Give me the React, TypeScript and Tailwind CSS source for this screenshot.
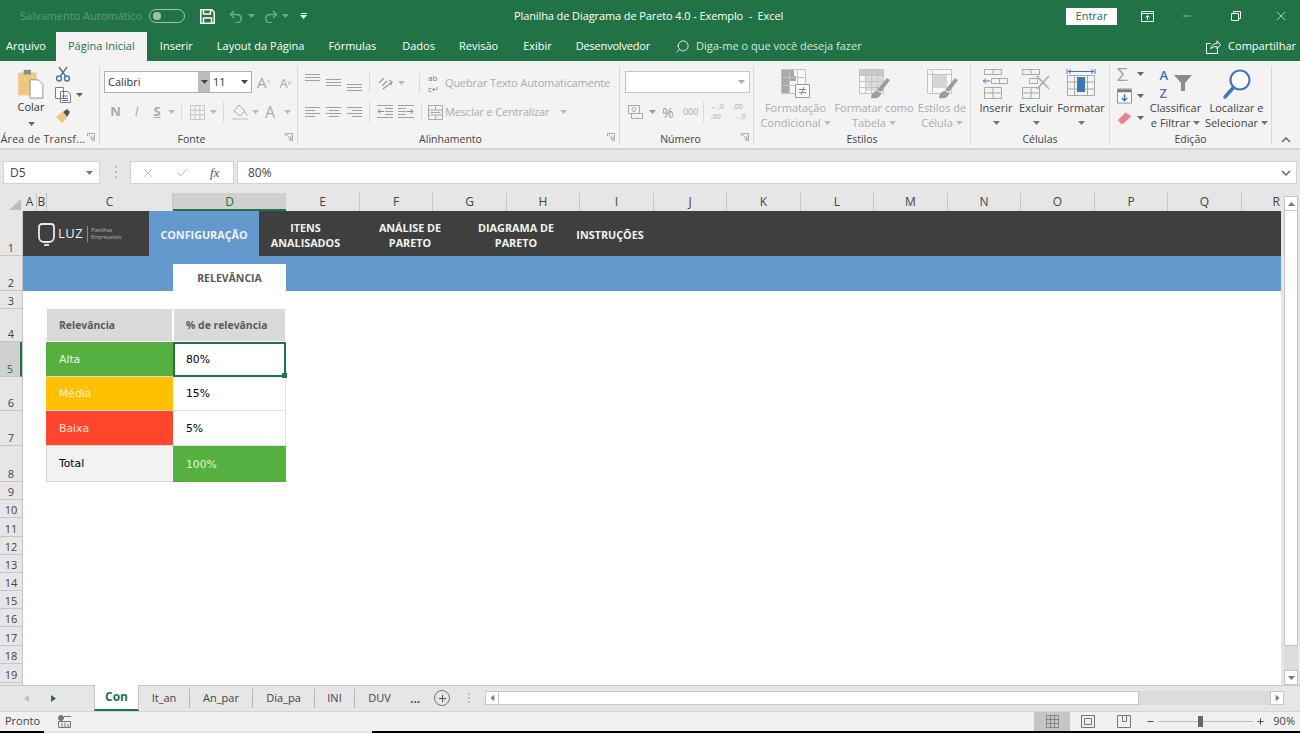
import { Check, Minus, Plus, Search, X } from 'lucide-react';
import type { ReactNode } from 'react';

const uiFont = "font-['Open_Sans','Noto_Sans',sans-serif]";

const columns: [string, number][] = [
  ['A', 14], ['B', 10], ['C', 126], ['D', 113], ['E', 74], ['F', 73], ['G', 74], ['H', 73], ['I', 74],
  ['J', 73], ['K', 74], ['L', 73], ['M', 74], ['N', 73], ['O', 74], ['P', 73], ['Q', 74], ['R', 39],
];

const rowHeights = [45, 35, 18, 33, 35, 34, 35, 36, 18, 18, 19, 18, 18, 18, 18, 18, 19, 18, 19];

const tabs = [
  { label: 'It_an', w: 'w-[51px]' },
  { label: 'An_par', w: 'w-[63px]' },
  { label: 'Dia_pa', w: 'w-[62px]' },
  { label: 'INI', w: 'w-[40px]' },
];

const menu = [
  { label: 'Inserir', cls: 'ml-[13px]' },
  { label: 'Layout da Página', cls: 'ml-[24px]' },
  { label: 'Fórmulas', cls: 'ml-[24px]' },
  { label: 'Dados', cls: 'ml-[26px]' },
  { label: 'Revisão', cls: 'ml-[24px]' },
  { label: 'Exibir', cls: 'ml-[25px]' },
  { label: 'Desenvolvedor', cls: 'ml-[24px] tracking-[-0.2px]' },
];

function Caret({ className = 'text-[#8a8a8a]' }: { className?: string }) {
  return (
    <svg width="7" height="4" viewBox="0 0 7 4" className={`shrink-0 ${className}`}>
      <path d="M0 0h7L3.5 4z" fill="currentColor" />
    </svg>
  );
}

function Launcher() {
  return (
    <svg width="8" height="8" viewBox="0 0 8 8" className="absolute bottom-[4px] right-[4px]" fill="none" stroke="#a8a8a8">
      <path d="M.5 3V.5h7v7H5M2 2l4 4M6 3.5V6H3.5" />
    </svg>
  );
}

function Group({ w, label, labelCls = '', children }: { w: string; label: string; labelCls?: string; children: ReactNode }) {
  return (
    <div className={`relative mb-[3px] mt-[5px] flex shrink-0 flex-col border-r border-[#d8d8d8] ${w}`}>
      <div className="h-[66px] shrink-0">{children}</div>
      <div className={`mt-auto whitespace-nowrap pb-[1px] text-center text-[10.5px] leading-[14px] text-[#444] ${labelCls}`}>{label}</div>
    </div>
  );
}

function Lines({ widths, align = 'items-start' }: { widths: number[]; align?: string }) {
  return (
    <div className={`flex w-[15px] flex-col gap-[2px] ${align}`}>
      {widths.map((w, i) => (
        <div key={i} className="h-[1px] bg-[#9f9f9f]" style={{ width: w }} />
      ))}
    </div>
  );
}

function GridIcon({ className = 'text-[#b4b4b4]', size = 16 }: { className?: string; size?: number }) {
  return (
    <svg width={size} height={size} viewBox="0 0 16 16" fill="none" stroke="currentColor" className={className}>
      <path d="M.5.5h15v15H.5zM.5 5.5h15M.5 10.5h15M5.5.5v15M10.5.5v15" />
    </svg>
  );
}

function IndentIcon({ flip = false }: { flip?: boolean }) {
  return (
    <svg width="16" height="14" viewBox="0 0 16 14" fill="none" stroke="#a0a0a0" className={flip ? '-scale-x-100' : ''}>
      <path d="M0 .5h16M8 3.500h8M8 6.500h8M8 9.500h8M0 12.500h16" />
      <path d="M7 6.500H1M3.500 4L1 6.500 3.500 9" stroke="#7f8c99" />
    </svg>
  );
}

function BigStyleIcon({ variant }: { variant: 'cond' | 'table' | 'cell' }) {
  return (
    <svg width="36" height="32" viewBox="0 0 36 32" fill="none">
      <path d="M3.5 1.5h24v24h-24z" stroke="#c4c4c4" fill="#f8f8f8" />
      {variant === 'cond' && (
        <>
          <path d="M4 2h8v23H4zM12 8h6v5h-6zM12 2h4v6h-4z" fill="#a9a9a9" />
          <path d="M11.5 1.5v24M19.5 1.5v24M3.5 9.5h24M3.5 17.5h24" stroke="#c4c4c4" />
          <path d="M17.5 16.5h14v13h-14z" fill="#f8f8f8" stroke="#9c9c9c" />
          <path d="M21 21.5h7M21 24.5h7M26 19l-3 8" stroke="#8a8a8a" />
        </>
      )}
      {variant === 'table' && (
        <>
          <path d="M4 2h23v5H4z" fill="#c8c8c8" />
          <path d="M9 7h18v16H9z" fill="#dedade" />
          <path d="M3.5 7.5h24M3.5 13.5h24M3.5 19.5h24M9.5 1.5v24M15.5 1.5v24M21.5 1.5v24" stroke="#c4c4c4" />
          <path d="M21 22l10-12 3 2-9 12zM15 30c0-4 3-7 6-7l4 2c0 4-4 6-10 5z" fill="#9c9c9c" />
        </>
      )}
      {variant === 'cell' && (
        <>
          <path d="M8 6h15v14H8z" fill="#d6d6d6" />
          <path d="M8.5 1.5v24M3.5 6.5h24" stroke="#c4c4c4" />
          <path d="M21 22l10-12 3 2-9 12zM15 30c0-4 3-7 6-7l4 2c0 4-4 6-10 5z" fill="#9c9c9c" />
        </>
      )}
    </svg>
  );
}

function TitleBar() {
  return (
    <div className="relative flex h-[32px] shrink-0 items-center bg-[#217346] text-[#fff]">
      <span className="ml-[20px] w-[129px] text-[11px] text-[#5d9a7a]">Salvamento Automático</span>
      <div className="flex h-[14px] w-[36px] items-center rounded-full border border-[#9cc3ae] pl-[3px]">
        <div className="h-[8px] w-[8px] rounded-full bg-[#9cc3ae]" />
      </div>
      <svg width="15" height="15" viewBox="0 0 15 15" className="ml-[15px]" fill="none" stroke="#fff" strokeWidth="1.5">
        <path d="M.8.8h11l2.4 2.4v11H.8zM3.5 1v4h7V1M3.5 14V9h8v5" />
      </svg>
      <svg width="15" height="13" viewBox="0 0 15 13" className="ml-[14px]" fill="none" stroke="#6fa78a" strokeWidth="1.6">
        <path d="M5 1L1.5 4.5 5 8M2 4.5h7a4.2 4.2 0 010 8.2H6" />
      </svg>
      <Caret className="ml-[4px] text-[#6fa78a]" />
      <svg width="15" height="13" viewBox="0 0 15 13" className="ml-[8px]" fill="none" stroke="#6fa78a" strokeWidth="1.6">
        <path d="M10 1l3.5 3.5L10 8M13 4.5H6a4.2 4.2 0 000 8.2h3" />
      </svg>
      <Caret className="ml-[4px] text-[#6fa78a]" />
      <div className="ml-[11px] flex flex-col items-center gap-[1px]">
        <div className="h-[1px] w-[6px] bg-white" />
        <Caret className="text-white" />
      </div>
      <span className="ml-[207px] text-[11px] tracking-[-0.1px] whitespace-pre">Planilha de Diagrama de Pareto 4.0 - Exemplo  -  Excel</span>
      <div className="ml-auto flex items-center">
        <div className="flex h-[17px] w-[51px] items-center justify-center bg-white text-[11px] text-[#217346]">Entrar</div>
        <svg width="13" height="11" viewBox="0 0 13 11" className="ml-[24px]" fill="none" stroke="#fff">
          <path d="M.5.5h12v10H.5zM.5 2.5h12M6.5 9V4.5M4.5 6.5l2-2 2 2" />
        </svg>
        <Minus size={12} strokeWidth={1} className="ml-[27px]" />
        <svg width="10" height="10" viewBox="0 0 10 10" className="ml-[38px]" fill="none" stroke="#fff">
          <path d="M.5 2.5h7v7h-7zM2.5 2.5v-2h7v7h-2" />
        </svg>
        <X size={16} strokeWidth={1} className="ml-[32px] mr-[11px]" />
      </div>
    </div>
  );
}

function MenuRow() {
  return (
    <div className="flex h-[29px] shrink-0 items-center bg-[#217346] text-[11px] text-white">
      <span className="ml-[6px]">Arquivo</span>
      <div className="ml-[10px] flex h-full w-[91px] items-center justify-center bg-[#f3f3f3] text-[#217346]">Página Inicial</div>
      {menu.map((m) => (
        <span key={m.label} className={m.cls}>{m.label}</span>
      ))}
      <Search size={15} strokeWidth={1.3} className="ml-[25px] -scale-x-100" />
      <span className="ml-[6px] text-[#d7e6dd]">Diga-me o que você deseja fazer</span>
      <svg width="15" height="14" viewBox="0 0 15 14" className="ml-auto" fill="none" stroke="#fff">
        <path d="M5 3.5H.5v10h11V9M5 9c0-4 3-5.500 6-5.500V.8l3.500 4-3.500 4V6.500C8 6.500 6 7 5 9z" />
      </svg>
      <span className="ml-[7px] mr-[4px]">Compartilhar</span>
    </div>
  );
}

function Ribbon() {
  const disabled = 'text-[#ababab]';
  return (
    <div className="flex h-[89px] shrink-0 border-b-2 border-[#d4d4d4] bg-[#f3f3f3] text-[11px] text-[#444]">
      <Group w="w-[100px]" label="Área de Transf..." labelCls="pr-[13px] tracking-[0.3px]">
        <div className="flex">
          <div className="ml-[13px] flex w-[36px] flex-col items-center pt-[2px]">
            <svg width="30" height="31" viewBox="0 0 30 34">
              <path d="M1 5h20v25H1z" fill="#f0c77f" />
              <path d="M7 2h8v5H7z" fill="#8c8c8c" />
              <path d="M14 13h9l5 5v15H14z" fill="#fff" stroke="#8c8c8c" />
            </svg>
            <span className="text-[#333]">Colar</span>
            <Caret className="mt-[6px] text-[#666]" />
          </div>
          <div className="ml-[6px] flex flex-col gap-[5px]">
            <svg width="16" height="16" viewBox="0 0 16 16" fill="none">
              <path d="M4 1l6.500 9M12 1L5.500 10" stroke="#666" strokeWidth="1.300" />
              <circle cx="4" cy="12.500" r="2.500" stroke="#3f78b8" strokeWidth="1.400" />
              <circle cx="12" cy="12.500" r="2.500" stroke="#3f78b8" strokeWidth="1.400" />
            </svg>
            <div className="flex items-center gap-[5px]">
              <svg width="16" height="16" viewBox="0 0 16 16" fill="#fff" stroke="#7c7c7c">
                <path d="M.5.5h8v11h-8zM5.500 4.500h7l3 3v8h-10z" />
                <path d="M7 9h6M7 11.500h6M7 13.500h6" stroke="#3f78b8" />
              </svg>
              <Caret className="text-[#666]" />
            </div>
            <svg width="16" height="16" viewBox="0 0 16 16">
              <path d="M1 9l6-5 5 6-5 5z" fill="#f0c77f" />
              <path d="M8 4l4-3 3 3-3 5z" fill="#555" />
            </svg>
          </div>
        </div>
        <Launcher />
      </Group>

      <Group w="w-[198px]" label="Fonte" labelCls="pr-[14px]">
        <div className="ml-[4px] mt-[5px] flex h-[22px] w-[148px] border border-[#b0b0b0] bg-white">
          <span className="flex-1 pl-[3px] leading-[20px] text-[#333]">Calibri</span>
          <div className="flex w-[12px] items-center justify-center bg-[#bdbdbd]"><Caret className="text-[#444]" /></div>
          <div className="flex w-[41px] items-center justify-between px-[3px] text-[#333]">11<Caret className="text-[#444]" /></div>
        </div>
        <div className="absolute left-[157px] top-[7px] flex items-baseline gap-[9px] text-[15px] leading-[18px] text-[#a9a9a9]">
          <span>A<sup className="text-[7px]">^</sup></span>
          <span className="text-[13px]">A<sup className="text-[7px]">v</sup></span>
        </div>
        <div className={`mt-[9px] flex h-[20px] items-center pl-[6px] text-[13px] ${disabled}`}>
          <span className="w-[19px] text-center font-bold">N</span>
          <span className="ml-[4px] w-[15px] text-center italic">I</span>
          <span className="ml-[7px] w-[12px] text-center font-bold underline">S</span>
          <Caret className="ml-[5px] text-[#bbb]" />
          <div className="ml-[6px] h-[20px] w-[1px] bg-[#d8d8d8]" />
          <GridIcon className="ml-[8px] text-[#c4c4c4]" size={15} />
          <Caret className="ml-[5px] text-[#bbb]" />
          <div className="ml-[6px] h-[20px] w-[1px] bg-[#d8d8d8]" />
          <svg width="18" height="18" viewBox="0 0 18 18" className="ml-[7px]" fill="none" stroke="#a9a9a9">
            <path d="M8 2l6 6-5 5-6-5zM14 9c1 2 2 3 2 4" />
            <path d="M1 16h16" stroke="#d8d8d8" strokeWidth="2" />
          </svg>
          <Caret className="ml-[3px] text-[#bbb]" />
          <span className="ml-[6px] text-[16px]">A</span>
          <Caret className="ml-[9px] text-[#bbb]" />
        </div>
        <Launcher />
      </Group>

      <Group w="w-[322px]" label="Alinhamento" labelCls="pr-[16px]">
        <div className="mt-[6px] flex h-[22px] items-center pl-[7px]">
          <div className="flex h-[18px] w-[57px] gap-[6px]">
            <Lines widths={[15, 15, 15]} />
            <div className="mt-[5px]"><Lines widths={[15, 15, 15]} /></div>
            <div className="mt-[10px]"><Lines widths={[15, 15, 15]} /></div>
          </div>
          <div className="ml-[7px] h-[20px] w-[1px] bg-[#d8d8d8]" />
          <svg width="16" height="16" viewBox="0 0 16 16" className="ml-[7px]" fill="none" stroke="#9a9a9a">
            <path d="M2 8l5-5M5 11l5-5M6 14l9-7M12 5l3 2-1 3" strokeWidth="1.200" />
          </svg>
          <Caret className="ml-[5px] text-[#bbb]" />
          <div className="ml-[14px] h-[20px] w-[1px] bg-[#d8d8d8]" />
          <span className="ml-[8px] w-[15px] text-[8px] leading-[11px] text-[#777]">ab<br />c↵</span>
          <span className={`ml-[2px] whitespace-nowrap tracking-[-0.15px] ${disabled}`}>Quebrar Texto Automaticamente</span>
        </div>
        <div className="mt-[7px] flex h-[22px] items-center pl-[7px]">
          <div className="flex w-[57px] gap-[6px]">
            <Lines widths={[15, 10, 15, 10]} />
            <Lines widths={[15, 10, 15, 10]} align="items-center" />
            <Lines widths={[15, 10, 15, 10]} align="items-end" />
          </div>
          <div className="ml-[7px] h-[20px] w-[1px] bg-[#d8d8d8]" />
          <div className="ml-[7px] w-[16px]"><IndentIcon /></div>
          <div className="ml-[5px] w-[16px]"><IndentIcon flip /></div>
          <div className="ml-[7px] h-[20px] w-[1px] bg-[#d8d8d8]" />
          <svg width="15" height="15" viewBox="0 0 15 15" className="ml-[6px]" fill="none" stroke="#a9a9a9">
            <path d="M.5.5h14v14H.5zM.5 5h14M.5 10h14M7.500.5V5M7.500 10v4.500M3 7.500h9M4 6.500l-1 1 1 1M11 6.500l1 1-1 1" />
          </svg>
          <span className={`ml-[2px] whitespace-nowrap tracking-[-0.15px] ${disabled}`}>Mesclar e Centralizar</span>
          <Caret className="ml-[11px] text-[#bbb]" />
        </div>
        <Launcher />
      </Group>

      <Group w="w-[134px]" label="Número" labelCls="pr-[12px]">
        <div className="ml-[5px] mt-[5px] flex h-[22px] w-[125px] items-center justify-end border border-[#c6c6c6] bg-white pr-[4px]">
          <Caret className="text-[#aaa]" />
        </div>
        <div className={`mt-[9px] flex h-[20px] items-center pl-[8px] ${disabled}`}>
          <svg width="15" height="14" viewBox="0 0 15 14" fill="none" stroke="#a9a9a9">
            <path d="M.5.500h11v8H.5zM3.500 8.500h11v5h-11z" />
            <circle cx="6" cy="4.500" r="2" />
          </svg>
          <Caret className="ml-[6px] text-[#999]" />
          <span className="ml-[6px] w-[14px] text-[14px] text-[#999]">%</span>
          <span className="ml-[7px] w-[16px] text-[9px]">000</span>
          <div className="ml-[4px] h-[20px] w-[1px] bg-[#d8d8d8]" />
          <span className="ml-[7px] w-[16px] text-[7px] leading-[10px]">←,0<br />,00</span>
          <span className="ml-[6px] w-[14px] text-[7px] leading-[10px]">,00<br />→,0</span>
        </div>
        <Launcher />
      </Group>

      <Group w="w-[217px]" label="Estilos">
        <div className={`flex pt-[2px] leading-[15px] ${disabled}`}>
          <div className="ml-[5px] flex w-[73px] flex-col items-center">
            <BigStyleIcon variant="cond" />
            <span className="whitespace-nowrap">Formatação</span>
            <span className="flex items-center gap-[3px]">Condicional<Caret className="text-[#bbb]" /></span>
          </div>
          <div className="flex w-[84px] flex-col items-center">
            <BigStyleIcon variant="table" />
            <span className="whitespace-nowrap">Formatar como</span>
            <span className="flex items-center gap-[3px]">Tabela<Caret className="text-[#bbb]" /></span>
          </div>
          <div className="flex w-[52px] flex-col items-center">
            <BigStyleIcon variant="cell" />
            <span className="whitespace-nowrap">Estilos de</span>
            <span className="flex items-center gap-[3px]">Célula<Caret className="text-[#bbb]" /></span>
          </div>
        </div>
      </Group>

      <Group w="w-[139px]" label="Células">
        <div className="flex pt-[2px] leading-[15px]">
          <div className="ml-[6px] flex w-[38px] flex-col items-center">
            <svg width="28" height="32" viewBox="0 0 28 32" fill="none" stroke="#a9a9a9">
              <path d="M2.500 1.500h17v5h-17zM11 1.500v5M2.500 19.500h17v11h-17zM2.500 25h17M11 19.500v11M9.500 10.500h16v5h-16zM17.500 10.500v5" />
              <path d="M8 13H1M4 10.500L1.500 13 4 15.500" stroke="#3f78b8" />
            </svg>
            <span>Inserir</span>
            <Caret className="mt-[6px] text-[#777]" />
          </div>
          <div className="flex w-[42px] flex-col items-center">
            <svg width="30" height="32" viewBox="0 0 30 32" fill="none" stroke="#a9a9a9">
              <path d="M1.500 1.500h17v5h-17zM10 1.500v5M1.500 19.500h17v11h-17zM1.500 25h17M10 19.500v11M8.500 10.500h8v5h-8z" />
              <path d="M16 8l12 13M28 8L16 21" strokeWidth="1.500" />
            </svg>
            <span>Excluir</span>
            <Caret className="mt-[6px] text-[#777]" />
          </div>
          <div className="flex w-[48px] flex-col items-center">
            <svg width="30" height="32" viewBox="0 0 30 32" fill="none" stroke="#a9a9a9">
              <path d="M1.500 7.500h27v20h-27zM1.500 14h27M1.500 21h27M8.500 7.500v20M21.500 7.500v20" />
              <path d="M11 9h8v15h-8z" fill="#3f78b8" stroke="none" />
              <path d="M1 1v5M29 1v5M2 3.500h26M5 1.500L2.500 3.500 5 5.500M25 1.500l2.500 2-2.500 2" stroke="#3f78b8" />
            </svg>
            <span>Formatar</span>
            <Caret className="mt-[6px] text-[#777]" />
          </div>
        </div>
      </Group>

      <Group w="w-[162px]" label="Edição">
        <div className="flex leading-[15px]">
          <div className="ml-[7px] flex w-[27px] flex-col gap-[6px]">
            <div className="flex h-[16px] items-center gap-[5px]">
              <span className="w-[16px] text-[19px] leading-[16px] text-[#a0a0a0]">Σ</span>
              <Caret className="text-[#666]" />
            </div>
            <div className="flex h-[16px] items-center gap-[5px]">
              <svg width="16" height="16" viewBox="0 0 16 16" fill="#fff" stroke="#8c8c8c">
                <path d="M.5.500h15v15H.5z" />
                <path d="M1 1h14v3H1z" fill="#777" stroke="none" />
                <path d="M8 6v7M5 10l3 3 3-3" stroke="#2f75b5" strokeWidth="1.500" fill="none" />
              </svg>
              <Caret className="text-[#666]" />
            </div>
            <div className="flex h-[16px] items-center gap-[5px]">
              <svg width="16" height="14" viewBox="0 0 16 14">
                <path d="M1 9l8-8 6 4-8 8H4z" fill="#ee7f8c" />
              </svg>
              <Caret className="text-[#666]" />
            </div>
          </div>
          <div className="flex w-[63px] flex-col items-center">
            <div className="flex h-[34px] w-[32px] items-start">
              <span className="w-[14px] text-[13px] font-semibold leading-[18px] text-[#2f75b5]">A<br /><span className="text-[#8a5aa6]">Z</span></span>
              <svg width="18" height="18" viewBox="0 0 18 18" className="mt-[8px]">
                <path d="M0 1h18l-7 8v8H7V9z" fill="#8c8c8c" />
              </svg>
            </div>
            <span>Classificar</span>
            <span className="flex items-center gap-[3px] whitespace-nowrap">e Filtrar<Caret className="text-[#777]" /></span>
          </div>
          <div className="ml-[1px] flex w-[57px] flex-col items-center pt-[2px]">
            <svg width="30" height="32" viewBox="0 0 30 32" fill="none">
              <circle cx="18" cy="12" r="9.500" stroke="#3f78b8" strokeWidth="2.200" fill="#fff" />
              <path d="M11 20L3 29" stroke="#3f78b8" strokeWidth="3.500" strokeLinecap="round" />
            </svg>
            <span className="whitespace-nowrap">Localizar e</span>
            <span className="flex items-center gap-[3px] whitespace-nowrap">Selecionar<Caret className="text-[#777]" /></span>
          </div>
        </div>
      </Group>

      <div className="flex flex-1 items-end justify-center pb-[5px]">
        <svg width="10" height="6" viewBox="0 0 10 6" fill="none" stroke="#666" strokeWidth="1.500">
          <path d="M1 5l4-4 4 4" />
        </svg>
      </div>
    </div>
  );
}

function FormulaBar() {
  return (
    <div className="flex h-[36px] shrink-0 items-start bg-[#e6e6e6] pt-[11px] text-[12px] text-[#444]">
      <div className="ml-[3px] flex h-[23px] w-[97px] items-center justify-between border border-[#d4d4d4] bg-white pl-[6px] pr-[6px]">
        D5<Caret className="text-[#777]" />
      </div>
      <div className="ml-[15px] mt-[5px] flex h-[12px] w-[2px] flex-col justify-between">
        <div className="h-[2px] bg-[#b8b8b8]" />
        <div className="h-[2px] bg-[#b8b8b8]" />
        <div className="h-[2px] bg-[#b8b8b8]" />
      </div>
      <div className="ml-[13px] flex h-[23px] w-[104px] items-center border border-[#d4d4d4] bg-white pl-[10px] text-[#b4b4b4]">
        <X size={14} strokeWidth={1.5} />
        <Check size={15} strokeWidth={1.5} className="ml-[20px]" />
        <span className="ml-[20px] font-['Liberation_Serif',serif] text-[13px] italic text-[#555]">fx</span>
      </div>
      <div className="ml-[3px] flex h-[23px] w-[1060px] items-center justify-between border border-[#d4d4d4] bg-white pl-[10px] pr-[5px]">
        80%
        <svg width="10" height="6" viewBox="0 0 10 6" fill="none" stroke="#666" strokeWidth="1.500">
          <path d="M1 1l4 4 4-4" />
        </svg>
      </div>
    </div>
  );
}

function ColumnHeaders() {
  return (
    <div className="flex h-[18px] items-stretch bg-[#e6e6e6] text-[12px] leading-[18px] text-[#444]">
      <div className="relative h-full w-[23px] shrink-0">
        <svg width="12" height="11" viewBox="0 0 12 11" className="absolute bottom-[1px] right-[2px]">
          <path d="M12 0v11H0z" fill="#bdbdbd" />
        </svg>
      </div>
      {columns.map(([name, w]) => (
        <div
          key={name}
          style={{ width: w }}
          className={
            name === 'D'
              ? 'border-b-2 border-[#217346] bg-[#d0d0d0] text-center text-[#217346]'
              : name === 'R'
                ? 'pr-[1px] text-right'
                : 'border-r border-[#c6c6c6] text-center'
          }
        >
          {name}
        </div>
      ))}
    </div>
  );
}

function RowHeaders() {
  return (
    <div className="w-[23px] shrink-0 border-r border-[#c6c6c6] bg-[#e6e6e6] text-[11px] text-[#444]">
      {rowHeights.map((h, i) => (
        <div
          key={i}
          style={{ height: h }}
          className={`flex items-end justify-center border-b border-[#c6c6c6] leading-[14px] ${
            i === 4 ? 'border-r-2 border-r-[#217346] bg-[#d0d0d0] text-[#217346]' : ''
          }`}
        >
          {i + 1}
        </div>
      ))}
    </div>
  );
}

function NavItem({ w, children }: { w: string; children: ReactNode }) {
  return <div className={`flex shrink-0 items-center justify-center pt-[2px] text-center ${w}`}>{children}</div>;
}

function ConfigTable() {
  const cell = "flex items-center pt-[2px] font-['DejaVu_Sans',sans-serif] text-[10.8px]";
  const head = "mb-[1px] ml-[1px] mr-[1px] flex items-center bg-[#d9d9d9] pl-[12px] pt-[2px] text-[10.4px] font-bold text-[#595959]";
  return (
    <div className="ml-[23px] mt-[18px] grid w-[240px] grid-cols-[127px_113px] grid-rows-[33px_35px_34px_35px_36px]">
      <div className={head}>Relevância</div>
      <div className={head}>% de relevância</div>
      <div className={`${cell} border-b border-[#d9d9d9] bg-[#55b03f] pl-[13px] text-[#f2f2f2]`}>Alta</div>
      <div className={`${cell} relative border-2 border-[#217346] bg-white pl-[11px] text-black`}>
        80%
        <div className="absolute -bottom-[3px] -right-[3px] h-[5px] w-[5px] bg-[#217346]" />
      </div>
      <div className={`${cell} border-b border-[#d9d9d9] bg-[#ffc000] pl-[13px] text-[#fff4d0]`}>Média</div>
      <div className={`${cell} border-b border-r border-[#e2e2e2] bg-white pl-[13px] text-black`}>15%</div>
      <div className={`${cell} border-b border-[#d9d9d9] bg-[#ff462d] pl-[13px] text-[#ffe3dd]`}>Baixa</div>
      <div className={`${cell} border-b border-r border-[#e2e2e2] bg-white pl-[13px] text-black`}>5%</div>
      <div className={`${cell} border-b border-l border-[#d9d9d9] bg-[#f2f2f2] pl-[12px] text-black`}>Total</div>
      <div className={`${cell} bg-[#55b03f] pl-[13px] text-[#e4f2df]`}>100%</div>
    </div>
  );
}

function Sheet() {
  return (
    <div className="flex flex-1 overflow-hidden">
      <RowHeaders />
      <div className="w-[1258px] bg-white">
        <div className="flex h-[45px] bg-[#3f3f3f] text-[10.8px] font-bold leading-[15px] text-[#f2f2f2]">
          <div className="flex w-[126px] shrink-0 items-center pl-[15px]">
            <svg width="17" height="24" viewBox="0 0 17 24" fill="none" stroke="#e8e8e8" strokeWidth="1.800">
              <path d="M4 2h9a3 3 0 013 3v10a5 5 0 01-5 5H6a5 5 0 01-5-5V5a3 3 0 013-3z" />
              <path d="M6 23h5" />
            </svg>
            <span className="ml-[3px] text-[13px] font-normal tracking-[0.5px]">LUZ</span>
            <div className="ml-[4px] h-[16px] w-[1px] bg-[#8a8a8a]" />
            <span className="ml-[3px] text-[5px] font-normal leading-[7px] text-[#b5b5b5]">Planilhas<br />Empresariais</span>
          </div>
          <NavItem w="w-[110px] bg-[#6399cd]">CONFIGURAÇÃO</NavItem>
          <NavItem w="w-[93px]">ITENS<br />ANALISADOS</NavItem>
          <NavItem w="w-[116px]">ANÁLISE DE<br />PARETO</NavItem>
          <NavItem w="w-[96px]">DIAGRAMA DE<br />PARETO</NavItem>
          <NavItem w="w-[92px]">INSTRUÇÕES</NavItem>
        </div>
        <div className="h-[35px] bg-[#6399cd] pt-[8px]">
          <div className="ml-[150px] flex h-[27px] w-[113px] items-center justify-center bg-white pt-[2px] text-[10.5px] font-bold text-[#595959]">RELEVÂNCIA</div>
        </div>
        <ConfigTable />
      </div>
    </div>
  );
}

function VerticalScroll() {
  return (
    <div className="flex w-[19px] shrink-0 flex-col pl-[3px] pr-[2px] pt-[10px]">
      <div className="flex h-[15px] items-center justify-center border border-[#c6c6c6] bg-white">
        <Caret className="rotate-180 text-[#777]" />
      </div>
      <div className="h-[435px] border-x border-b border-[#c6c6c6] bg-white" />
      <div className="flex-1 bg-[#dcdcdc]" />
      <div className="flex h-[15px] items-center justify-center border border-[#c6c6c6] bg-white">
        <Caret className="text-[#777]" />
      </div>
    </div>
  );
}

function SheetTabs() {
  return (
    <div className="flex h-[26px] shrink-0 items-stretch border-t border-[#c6c6c6] bg-[#e6e6e6] text-[11px] text-[#444]">
      <div className="flex w-[94px] items-center pl-[24px]">
        <svg width="5" height="7" viewBox="0 0 5 7"><path d="M5 0v7L0 3.500z" fill="#c0c0c0" /></svg>
        <svg width="5" height="7" viewBox="0 0 5 7" className="ml-[22px]"><path d="M0 0v7l5-3.500z" fill="#217346" /></svg>
      </div>
      <div className="-mt-[1px] flex w-[45px] items-center justify-center border-x border-b-2 border-[#c6c6c6] border-b-[#217346] bg-white text-[12px] font-bold text-[#217346]">Con</div>
      {tabs.map((t) => (
        <div key={t.label} className={`my-[3px] flex items-center justify-center border-r border-[#b8b8b8] ${t.w}`}>{t.label}</div>
      ))}
      <div className="flex w-[49px] items-center justify-center">DUV</div>
      <span className="ml-[6px] flex w-[13px] items-center text-[12px] font-bold text-[#217346]">...</span>
      <div className="ml-[11px] mt-[4px] flex h-[16px] w-[16px] items-center justify-center rounded-full border border-[#777]">
        <Plus size={11} strokeWidth={2} />
      </div>
      <div className="ml-[18px] mt-[7px] flex h-[10px] w-[2px] flex-col justify-between">
        <div className="h-[2px] bg-[#c0c0c0]" />
        <div className="h-[2px] bg-[#c0c0c0]" />
        <div className="h-[2px] bg-[#c0c0c0]" />
      </div>
      <div className="ml-[15px] mt-[5px] flex h-[14px] w-[799px]">
        <div className="flex w-[14px] items-center justify-center border border-[#c6c6c6] bg-white">
          <Caret className="rotate-90 text-[#777]" />
        </div>
        <div className="w-[640px] border-y border-r border-[#c6c6c6] bg-white" />
        <div className="flex-1 bg-[#dcdcdc]" />
        <div className="flex w-[14px] items-center justify-center border border-[#c6c6c6] bg-white">
          <Caret className="-rotate-90 text-[#777]" />
        </div>
      </div>
    </div>
  );
}

function StatusBar() {
  return (
    <div className="flex h-[20px] shrink-0 items-center border-t border-[#d4d4d4] bg-[#f0f0f0] text-[11px] text-[#444]">
      <span className="ml-[5px]">Pronto</span>
      <svg width="13" height="13" viewBox="0 0 13 13" className="ml-[18px]" fill="none" stroke="#777">
        <circle cx="3" cy="3" r="2.500" fill="#777" />
        <path d="M6 1.500h7M.500 6.500h12v6H.500zM4 8v4M7 7.500v5M10 9v3" />
      </svg>
      <div className="ml-auto flex h-full items-center">
        <div className="flex h-full w-[36px] items-center justify-center bg-[#c6c6c6]">
          <GridIcon className="text-[#777]" size={13} />
        </div>
        <svg width="14" height="13" viewBox="0 0 14 13" className="ml-[11px]" fill="none" stroke="#777">
          <path d="M.500.500h13v12H.500zM3.500 3.500h7v6h-7z" />
        </svg>
        <svg width="14" height="13" viewBox="0 0 14 13" className="ml-[22px]" fill="none" stroke="#777">
          <path d="M.500.500h13v12H.500zM5.500.500v6h4v-6" />
        </svg>
        <Minus size={9} strokeWidth={2.500} className="ml-[15px]" />
        <div className="relative ml-[3px] h-[1px] w-[95px] bg-[#bdbdbd]">
          <div className="absolute -top-[5px] left-[40px] h-[11px] w-[5px] bg-[#666]" />
        </div>
        <Plus size={9} strokeWidth={2.500} className="ml-[3px]" />
        <span className="ml-[8px] mr-[5px]">90%</span>
      </div>
    </div>
  );
}

export default function App() {
  return (
    <div className={`flex h-[733px] w-[1300px] flex-col overflow-hidden bg-[#e6e6e6] ${uiFont}`}>
      <TitleBar />
      <MenuRow />
      <Ribbon />
      <FormulaBar />
      <div className="flex h-[499px] shrink-0 flex-col">
        <div className="flex flex-1 overflow-hidden">
          <div className="flex w-[1281px] shrink-0 flex-col pt-[7px]">
            <ColumnHeaders />
            <Sheet />
          </div>
          <VerticalScroll />
        </div>
      </div>
      <SheetTabs />
      <StatusBar />
      <div className="flex h-[2px] shrink-0 bg-black">
        <div className="ml-[44px] h-full w-[328px] bg-[#e6e6e6]" />
      </div>
    </div>
  );
}
